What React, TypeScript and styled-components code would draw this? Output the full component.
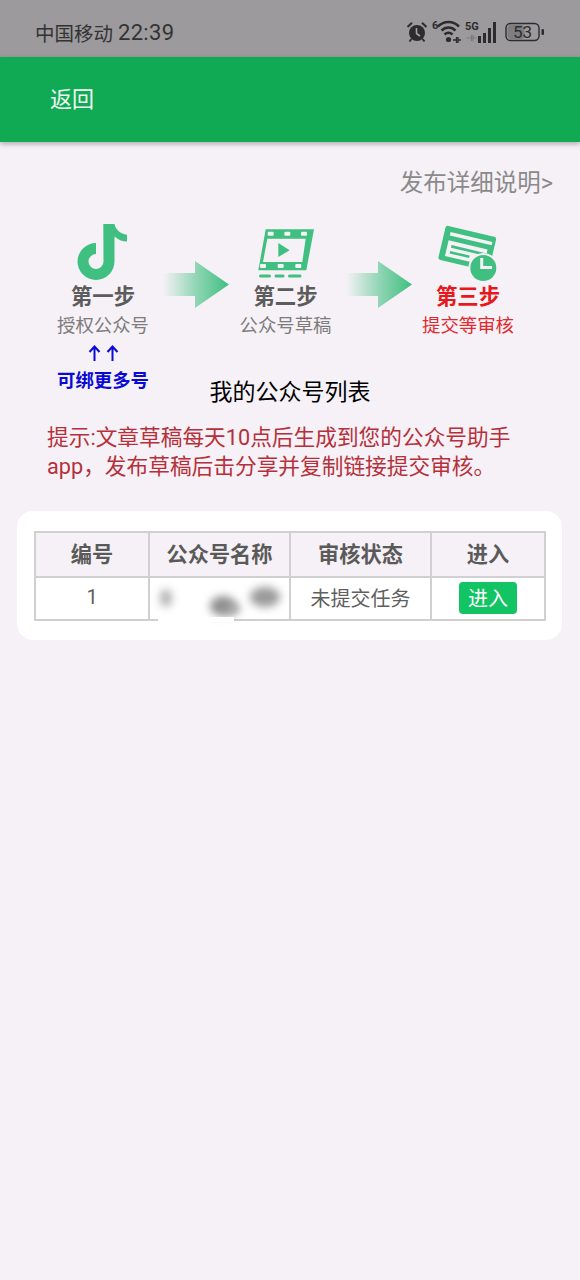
import React from 'react'
import styled, { createGlobalStyle } from 'styled-components'

const GlobalStyle = createGlobalStyle`
  html, body {
    margin: 0;
    padding: 0;
    background: #f6f1f6;
    font-family: Roboto, "Noto Sans CJK SC", sans-serif;
  }
  * { box-sizing: border-box; }
`

const Page = styled.div`
  width: 580px;
  height: 1280px;
  overflow: hidden;
  background: #f6f1f6;
`

const StatusBar = styled.div`
  height: 57px;
  background: #9c9a9d;
  display: flex;
  align-items: center;
  justify-content: space-between;
  padding: 7px 35px 0 35px;
  color: #333;
`

const Carrier = styled.div`
  display: flex;
  align-items: center;
  gap: 5px;
  font-size: 19.5px;
`

const Clock = styled.span`
  font-size: 22px;
  letter-spacing: 0.3px;
`

const StatusIcons = styled.div`
  display: flex;
  align-items: center;
`

const Header = styled.header`
  height: 85px;
  background: #10aa54;
  box-shadow: 0 2px 5px rgba(0, 0, 0, 0.3);
  display: flex;
  align-items: center;
  padding: 0 0 6px 50px;
  color: #f2f8f4;
  font-size: 22px;
`

const Content = styled.main`
  display: flex;
  flex-direction: column;
`

const DetailLink = styled.a`
  align-self: flex-end;
  margin: 25px 27px 0 0;
  font-size: 23.5px;
  line-height: 32px;
  color: #8a8a8a;
`

const Steps = styled.div`
  display: flex;
  align-items: flex-start;
  margin-top: 23px;
  padding-left: 43px;
`

const Step = styled.div`
  width: 120px;
  flex: none;
  display: flex;
  flex-direction: column;
  align-items: center;
`

const IconSlot = styled.div<{ $top: number }>`
  height: 58px;
  padding-top: ${p => p.$top}px;
`

const StepTitle = styled.div<{ $active?: boolean }>`
  margin-top: 2px;
  font-size: 21.4px;
  line-height: 29px;
  font-weight: 700;
  color: ${p => (p.$active ? '#e8171b' : '#5c5c5c')};
`

const StepText = styled.div<{ $active?: boolean }>`
  margin-top: 1px;
  font-size: 18.4px;
  line-height: 28px;
  color: ${p => (p.$active ? '#e02a2e' : '#7c7c7c')};
`

const UpArrows = styled.div`
  display: flex;
  gap: 5px;
  margin-top: 2px;
  height: 22px;
  align-items: center;
`

const MoreText = styled.div`
  margin-top: 2px;
  font-size: 18.4px;
  line-height: 30px;
  font-weight: 700;
  color: #0a0ad6;
`

const Arrow = styled.svg`
  flex: none;
  margin: 39px -3.5px 0 0;
`

const ListTitle = styled.h2`
  margin: -20px 0 0;
  text-align: center;
  font-size: 23px;
  line-height: 34px;
  font-weight: 400;
  color: #000;
`

const Tip = styled.p`
  margin: 13px 60px 0 47px;
  font-size: 21.7px;
  line-height: 29px;
  color: #b5303a;
`

const Card = styled.section`
  margin: 30px 18px 0 17px;
  padding: 20px 17px 19px 17px;
  background: #fff;
  border-radius: 16px;
`

const Table = styled.table`
  width: 510px;
  table-layout: fixed;
  border-collapse: collapse;
  border: 2px solid #d0d0d0;
`

const HeadCell = styled.th`
  height: 45px;
  padding: 0 0 5px;
  background: #f6f1f6;
  border: 2px solid #d0d0d0;
  font-size: 21.2px;
  font-weight: 700;
  color: #5a5a5a;
`

const Cell = styled.td`
  height: 43px;
  padding: 0 0 3px;
  border: 2px solid #d0d0d0;
  text-align: center;
  font-size: 20px;
  color: #5f5f5f;
`

const RedactedCell = styled(Cell)`
  position: relative;
`

const Smudge = styled.span<{ $left: number; $top: number; $w: number; $h: number; $tone: string }>`
  position: absolute;
  left: ${p => p.$left}px;
  top: ${p => p.$top}px;
  width: ${p => p.$w}px;
  height: ${p => p.$h}px;
  border-radius: 50%;
  background: ${p => p.$tone};
  filter: blur(4px);
`

const Mask = styled.span`
  position: absolute;
  left: 8px;
  bottom: -3px;
  width: 76px;
  height: 5px;
  background: #fff;
`

const EnterButton = styled.button`
  width: 58px;
  height: 32px;
  padding: 0 0 2px;
  display: inline-flex;
  align-items: center;
  justify-content: center;
  border: none;
  border-radius: 4px;
  background: #12c463;
  color: #fff;
  font: inherit;
  vertical-align: middle;
  position: relative;
  top: 1px;
`

const GREEN = '#3fbf80'
const BG = '#f6f1f6'

const AlarmIcon = () => (
  <svg width="22" height="22" viewBox="0 0 22 22">
    <circle cx="11" cy="12" r="8" fill="#2c2c2c" />
    <path d="M1.5 6 L6 1.8 M20.5 6 L16 1.8 M5.5 18 L3.5 20.5 M16.5 18 L18.5 20.5" stroke="#2c2c2c" strokeWidth="2" />
    <path d="M10.5 7 V12.5 L14 15" stroke="#a5a3a6" strokeWidth="1.6" fill="none" />
  </svg>
)

const WifiIcon = () => (
  <svg width="30" height="24" viewBox="0 0 30 24" style={{ marginLeft: 4 }}>
    <text x="0" y="9" fontSize="11" fontWeight="700" fill="#2c2c2c" fontFamily="Roboto">6</text>
    <path d="M6 6.5 C12 0.5 21 0.5 27 6.5 M9.5 10.5 C13.5 6.5 19.5 6.5 23.5 10.5 M12.5 14.5 C15 12.3 18 12.3 20.5 14.5" stroke="#2c2c2c" strokeWidth="2.6" fill="none" />
    <circle cx="16.5" cy="19.5" r="2.6" fill="#2c2c2c" />
    <path d="M21 20 H24 M26 20 H29 M24.5 17 V23 M26 17 V23" stroke="#2c2c2c" strokeWidth="1.3" />
  </svg>
)

const SignalIcon = () => (
  <svg width="34" height="24" viewBox="0 0 34 24" style={{ marginLeft: 3 }}>
    <text x="0" y="10" fontSize="11" fontWeight="700" fill="#2c2c2c" fontFamily="Roboto">5G</text>
    <path d="M1.5 18 H6 M8 18 H12 M6.5 15 V21 M8 15 V21" stroke="#7d7b7e" strokeWidth="1.2" />
    <rect x="13" y="16" width="3" height="7" fill="#2c2c2c" />
    <rect x="18" y="13" width="3" height="10" fill="#2c2c2c" />
    <rect x="23" y="8" width="3" height="15" fill="#2c2c2c" />
    <rect x="28" y="2" width="3" height="21" fill="#2c2c2c" />
  </svg>
)

const BatteryIcon = () => (
  <svg width="40" height="20" viewBox="0 0 40 20" style={{ marginLeft: 6 }}>
    <rect x="1" y="1.5" width="33" height="17" rx="4.5" fill="none" stroke="#2c2c2c" strokeWidth="1.4" />
    <rect x="2.5" y="3" width="17" height="14" rx="3" fill="#7f7d80" />
    <rect x="36.5" y="7" width="2.5" height="6" rx="1" fill="#2c2c2c" />
    <text x="17.5" y="16" textAnchor="middle" fontSize="17" fill="#2c2c2c" fontFamily="Roboto">53</text>
  </svg>
)

const NoteIcon = () => (
  <svg width="64" height="56" viewBox="0 6 64 56">
    <path
      fill={GREEN}
      d="M32.3 6 H43.5 C44.5 11.5 49.5 16 56 16.8 V23.5 C51 23.5 47 21.5 43.5 18.5 V43.5 A18.5 18.5 0 1 1 25 25 V36 A7.5 7.5 0 1 0 32.5 43.5 Z"
    />
  </svg>
)

const FilmIcon = () => (
  <svg width="60" height="52" viewBox="1 0 60 52">
    <path fill={GREEN} fillRule="evenodd" d="M10.7 1.3 H59 L51.3 42.3 H3.3 Z M12.3 10.7 L8 34 H47.3 L50.7 10.7 Z" />
    {[12.7, 29.3, 46].map(x => (
      <rect key={x} x={x} y="3.8" width="6" height="4" rx="1" fill={BG} />
    ))}
    {[5, 22.7, 40.3].map(x => (
      <rect key={x} x={x} y="36" width="6" height="4" rx="1" fill={BG} />
    ))}
    <path fill={GREEN} d="M23.3 15 L34.7 22.3 L23.3 29 Z" />
    <path stroke={GREEN} strokeWidth="3" strokeLinecap="round" d="M5.5 48 H14.5 M21 48 H28 M34.5 48 H45" />
  </svg>
)

const ReviewIcon = () => (
  <svg width="76" height="64" viewBox="0 4 76 64">
    <g transform="translate(16 7.3) rotate(13.3)">
      <rect x="0" y="0" width="52" height="35" rx="2.5" fill={GREEN} />
      <rect x="6" y="5.5" width="43" height="3.5" fill={BG} />
      <rect x="6" y="14" width="40" height="16" fill={BG} />
      <rect x="10" y="18" width="36" height="2.6" fill={GREEN} />
      <rect x="10" y="24" width="20" height="2.6" fill={GREEN} />
    </g>
    <circle cx="53.3" cy="50" r="15" fill={BG} />
    <circle cx="53.3" cy="50" r="13" fill={GREEN} />
    <path d="M51.7 40 V49.5 H62" stroke={BG} strokeWidth="3" fill="none" />
  </svg>
)

const StepArrow = ({ id }: { id: string }) => (
  <Arrow width="66" height="47" viewBox="0 0 66 47">
    <defs>
      <linearGradient id={id} x1="0" x2="1" y1="0" y2="0">
        <stop offset="0" stopColor={GREEN} stopOpacity="0" />
        <stop offset="0.5" stopColor={GREEN} stopOpacity="0.55" />
        <stop offset="1" stopColor={GREEN} />
      </linearGradient>
    </defs>
    <path fill={`url(#${id})`} d="M0 12 H32 V0 L66 23.5 L32 47 V35 H0 Z" />
  </Arrow>
)

const UpArrow = () => (
  <svg width="13" height="16" viewBox="0 0 13 16">
    <path d="M6.5 16 V2 M1.5 7 L6.5 1.5 L11.5 7" stroke="#0a0ad6" strokeWidth="2" fill="none" />
  </svg>
)

export default function App() {
  return (
    <Page>
      <GlobalStyle />
      <StatusBar>
        <Carrier>
          中国移动
          <Clock>22:39</Clock>
        </Carrier>
        <StatusIcons>
          <AlarmIcon />
          <WifiIcon />
          <SignalIcon />
          <BatteryIcon />
        </StatusIcons>
      </StatusBar>
      <Header>返回</Header>
      <Content>
        <DetailLink>发布详细说明&gt;</DetailLink>
        <Steps>
          <Step>
            <IconSlot $top={2}>
              <NoteIcon />
            </IconSlot>
            <StepTitle>第一步</StepTitle>
            <StepText>授权公众号</StepText>
            <UpArrows>
              <UpArrow />
              <UpArrow />
            </UpArrows>
            <MoreText>可绑更多号</MoreText>
          </Step>
          <StepArrow id="arrow-one" />
          <Step>
            <IconSlot $top={6}>
              <FilmIcon />
            </IconSlot>
            <StepTitle>第二步</StepTitle>
            <StepText>公众号草稿</StepText>
          </Step>
          <StepArrow id="arrow-two" />
          <Step>
            <IconSlot $top={0}>
              <ReviewIcon />
            </IconSlot>
            <StepTitle $active>第三步</StepTitle>
            <StepText $active>提交等审核</StepText>
          </Step>
        </Steps>
        <ListTitle>我的公众号列表</ListTitle>
        <Tip>提示:文章草稿每天10点后生成到您的公众号助手app，发布草稿后击分享并复制链接提交审核。</Tip>
        <Card>
          <Table>
            <colgroup>
              <col width="114" />
              <col width="141" />
              <col width="141" />
              <col width="114" />
            </colgroup>
            <thead>
              <tr>
                <HeadCell>编号</HeadCell>
                <HeadCell>公众号名称</HeadCell>
                <HeadCell>审核状态</HeadCell>
                <HeadCell>进入</HeadCell>
              </tr>
            </thead>
            <tbody>
              <tr>
                <Cell>1</Cell>
                <RedactedCell>
                  <Smudge $left={10} $top={11} $w={12} $h={18} $tone="#b0b0b0" />
                  <Smudge $left={60} $top={18} $w={26} $h={20} $tone="#8f8f8f" />
                  <Smudge $left={76} $top={26} $w={14} $h={10} $tone="#a5a5a5" />
                  <Smudge $left={100} $top={9} $w={30} $h={20} $tone="#9a9a9a" />
                  <Mask />
                </RedactedCell>
                <Cell>未提交任务</Cell>
                <Cell>
                  <EnterButton>进入</EnterButton>
                </Cell>
              </tr>
            </tbody>
          </Table>
        </Card>
      </Content>
    </Page>
  )
}
